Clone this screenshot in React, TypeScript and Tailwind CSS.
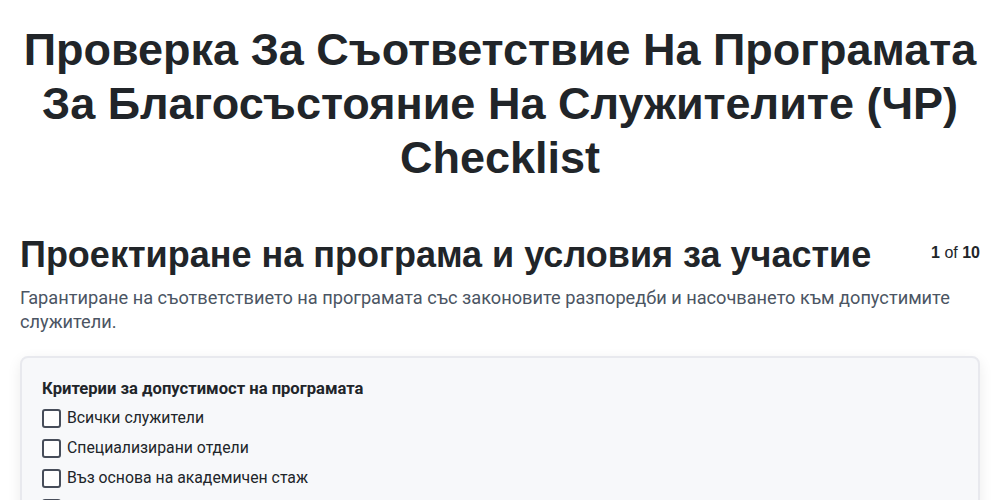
import React, { useState } from 'react'

const items = [
  "Всички служители",
  "Специализирани отдели",
  "Въз основа на академичен стаж",
  "Въз основа на длъжност",
]

const App = () => {
  const [checked, setChecked] = useState<boolean[]>(items.map(() => false))

  const toggle = (i: number) => {
    setChecked(prev => prev.map((v, idx) => (idx === i ? !v : v)))
  }

  return (
    <div className="min-h-screen bg-white text-[#212529] font-['Roboto',sans-serif]">
      <div className="max-w-[1000px] mx-auto px-5">
        <h1 className="pt-[23px] text-center font-['Liberation_Sans',Arial,sans-serif] font-bold text-[45px] leading-[54px] text-[#212529]">
          Проверка За Съответствие На Програмата За Благосъстояние На Служителите (ЧР) Checklist
        </h1>

        <div className="mt-[48px] flex items-start justify-between">
          <h2 className="font-['Liberation_Sans',Arial,sans-serif] font-bold text-[36px] leading-[43px] text-[#212529]">
            Проектиране на програма и условия за участие
          </h2>
          <div className="pt-[8px] text-[16px] text-[#212529] font-['Liberation_Sans',Arial,sans-serif]">
            <span className="font-bold">1</span> of <span className="font-bold">10</span>
          </div>
        </div>

        <p className="mt-[10px] text-[18.2px] leading-[24px] text-[#4b5563]">
          Гарантиране на съответствието на програмата със законовите разпоредби и насочването към допустимите служители.
        </p>

        <div className="mt-[22px] rounded-lg border-2 border-[#e8e9ee] bg-[#f7f8fa] shadow-[0_4px_14px_rgba(0,0,0,0.08)] px-5 pt-[20px] pb-5">
          <h3 className="text-[16.6px] font-bold leading-[22px] text-[#212529]">
            Критерии за допустимост на програмата
          </h3>
          <div className="mt-[3px] flex flex-col">
            {items.map((label, i) => (
              <label key={label} className="flex items-center gap-[6px] h-[30px] cursor-pointer">
                <span
                  onClick={() => toggle(i)}
                  className="w-[19px] h-[19px] rounded-[3px] border-2 border-[#474d5a] bg-white shrink-0 flex items-center justify-center"
                >
                  {checked[i] && <span className="w-[9px] h-[9px] bg-[#474d5a] rounded-[1px]" />}
                </span>
                <span className="text-[15.8px] text-[#212529]">{label}</span>
              </label>
            ))}
          </div>
        </div>
      </div>
    </div>
  )
}

export default App
